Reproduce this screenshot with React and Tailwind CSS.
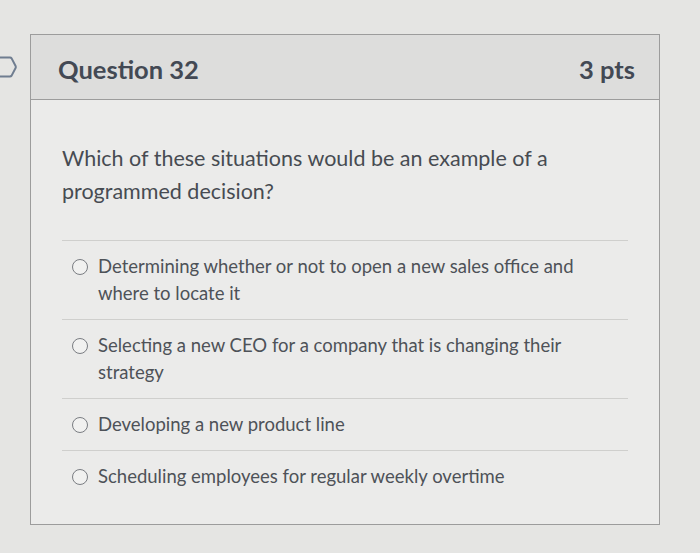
import React from "react";

const options = [
  "Determining whether or not to open a new sales office and where to locate it",
  "Selecting a new CEO for a company that is changing their strategy",
  "Developing a new product line",
  "Scheduling employees for regular weekly overtime",
];

const FlagIcon = () => (
  <svg width="17" height="22" viewBox="0 0 17 22" fill="none">
    <path
      d="M-6 1.5 H10 Q11 1.5 11.6 2.4 L15.6 10 Q16 11 15.6 12 L11.6 19.6 Q11 20.5 10 20.5 H-6"
      stroke="#6f7d90"
      strokeWidth="2"
      strokeLinejoin="round"
    />
  </svg>
);

const App = () => {
  return (
    <div className="w-[700px] h-[553px] overflow-hidden bg-[#e5e5e3] font-['Lato','Noto_Sans',sans-serif]">
      <div className="flex pt-[34px]">
        <div className="w-[17px] mt-[22px] shrink-0">
          <FlagIcon />
        </div>

        <div className="ml-[13px] w-[630px] h-[491px] border border-[#9c9c9c] bg-[#ebebea] flex flex-col">
          {/* header */}
          <div className="h-[65px] shrink-0 flex items-center justify-between pl-[27px] pr-[24px] bg-[#dddddc] border-b border-[#9c9c9c]">
            <h2 className="text-[25.5px] font-bold text-[#434954] pt-[4px]">Question 32</h2>
            <span className="text-[25.5px] font-bold text-[#434954] pt-[4px]">3 pts</span>
          </div>

          {/* body */}
          <div className="px-[31px] pt-[42px]">
            <p className="text-[21.5px] leading-[33px] text-[#474b52] w-[510px]">
              Which of these situations would be an example of a programmed decision?
            </p>

            <div className="mt-[32px] border-t border-[#cfcfcd]">
              {options.map((opt, i) => (
                <div
                  key={i}
                  className={
                    "flex items-start pl-[10px] pt-[12px] pb-[12px] " +
                    (i < options.length - 1 ? "border-b border-[#cfcfcd]" : "")
                  }
                >
                  <span className="mt-[6px] w-[16px] h-[16px] shrink-0 rounded-full border-[1.5px] border-[#7a7d82] bg-[#f1f1f0]" />
                  <span className="ml-[10px] text-[18.5px] leading-[27px] text-[#4e5258] w-[495px]">
                    {opt}
                  </span>
                </div>
              ))}
            </div>
          </div>
        </div>
      </div>
    </div>
  );
};

export default App;
